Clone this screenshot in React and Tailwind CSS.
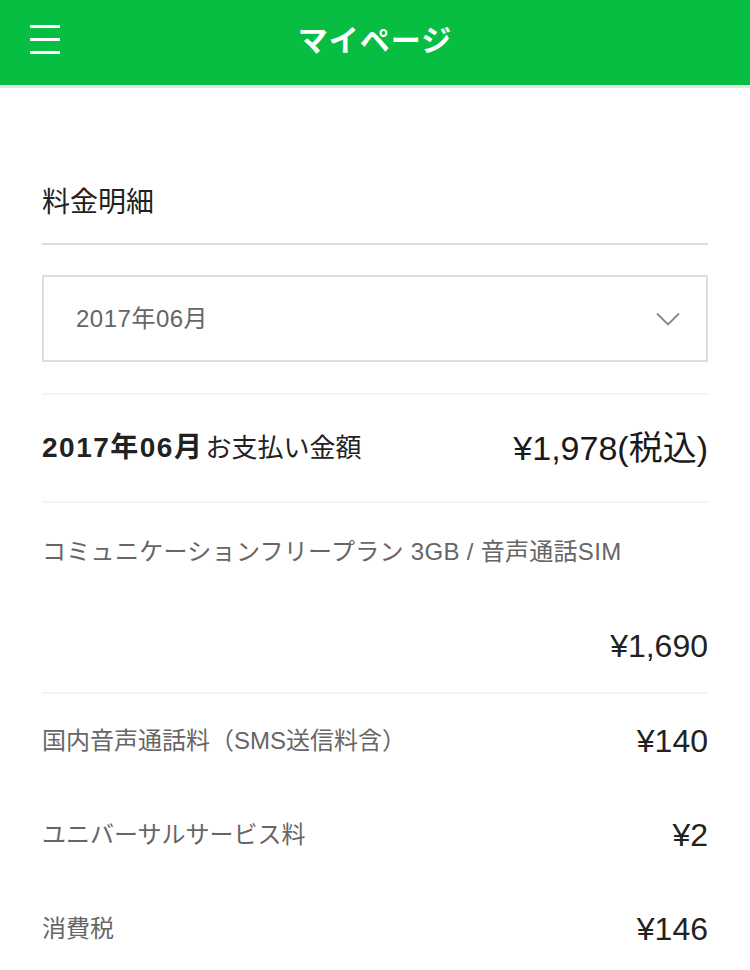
import React from 'react'

const font = { fontFamily: '"Liberation Sans", "Noto Sans CJK JP", sans-serif' }

const items = [
    { label: '国内音声通話料（SMS送信料含）', price: '¥140' },
    { label: 'ユニバーサルサービス料', price: '¥2' },
    { label: '消費税', price: '¥146' },
]

const App = () => {
    return (
        <div className="w-[750px] min-h-[970px] bg-white text-[#222]" style={font}>
            {/* ヘッダー */}
            <div className="relative h-[85px] bg-[#07be42] flex items-center justify-center border-b-[3px] border-[#e6e6e6] box-content">
                <div className="absolute left-[30px] top-[25px] flex flex-col gap-[10px]">
                    <span className="block w-[30px] h-[3px] bg-white"></span>
                    <span className="block w-[30px] h-[3px] bg-white"></span>
                    <span className="block w-[30px] h-[3px] bg-white"></span>
                </div>
                <div className="text-white text-[30px] font-bold leading-none tracking-[1px] -mt-[4px]">マイページ</div>
            </div>

            <div className="px-[42px]">
                {/* 見出し */}
                <div className="mt-[95px] pb-[20px] border-b-2 border-[#dddddd]">
                    <div className="text-[28px] leading-[40px]">料金明細</div>
                </div>

                {/* 月選択 */}
                <div className="mt-[30px] h-[87px] border-2 border-[#dddddd] flex items-center justify-between pl-[32px] pr-[26px]">
                    <span className="text-[24px] text-[#666] tracking-[0.5px]">2017年06月</span>
                    <svg width="24" height="14" viewBox="0 0 24 14" fill="none">
                        <path d="M1 1.5 L12 12.5 L23 1.5" stroke="#888" strokeWidth="1.8"/>
                    </svg>
                </div>

                {/* 合計 */}
                <div className="mt-[31px] border-t-2 border-[#f2f4f6] h-[110px] flex items-center justify-between border-b-2">
                    <div className="flex items-baseline">
                        <span className="text-[28px] font-bold tracking-[1.5px]">2017年06月</span>
                        <span className="text-[26px] ml-[2px]">お支払い金額</span>
                    </div>
                    <span className="text-[34px] text-[#1a1a1a]">¥1,978(税込)</span>
                </div>

                {/* プラン */}
                <div className="pt-[33px] pb-[26px] border-b-2 border-[#f2f4f6]">
                    <div className="text-[24px] text-[#666] leading-[32px] tracking-[0.3px]">コミュニケーションフリープラン 3GB / 音声通話SIM</div>
                    <div className="mt-[58px] text-right text-[32px] leading-[40px]">¥1,690</div>
                </div>

                {/* 明細 */}
                {items.map((item) => (
                    <div key={item.label} className="h-[94px] flex items-center justify-between">
                        <span className="text-[24px] text-[#666]">{item.label}</span>
                        <span className="text-[32px]">{item.price}</span>
                    </div>
                ))}
            </div>
        </div>
    )
}

export default App
